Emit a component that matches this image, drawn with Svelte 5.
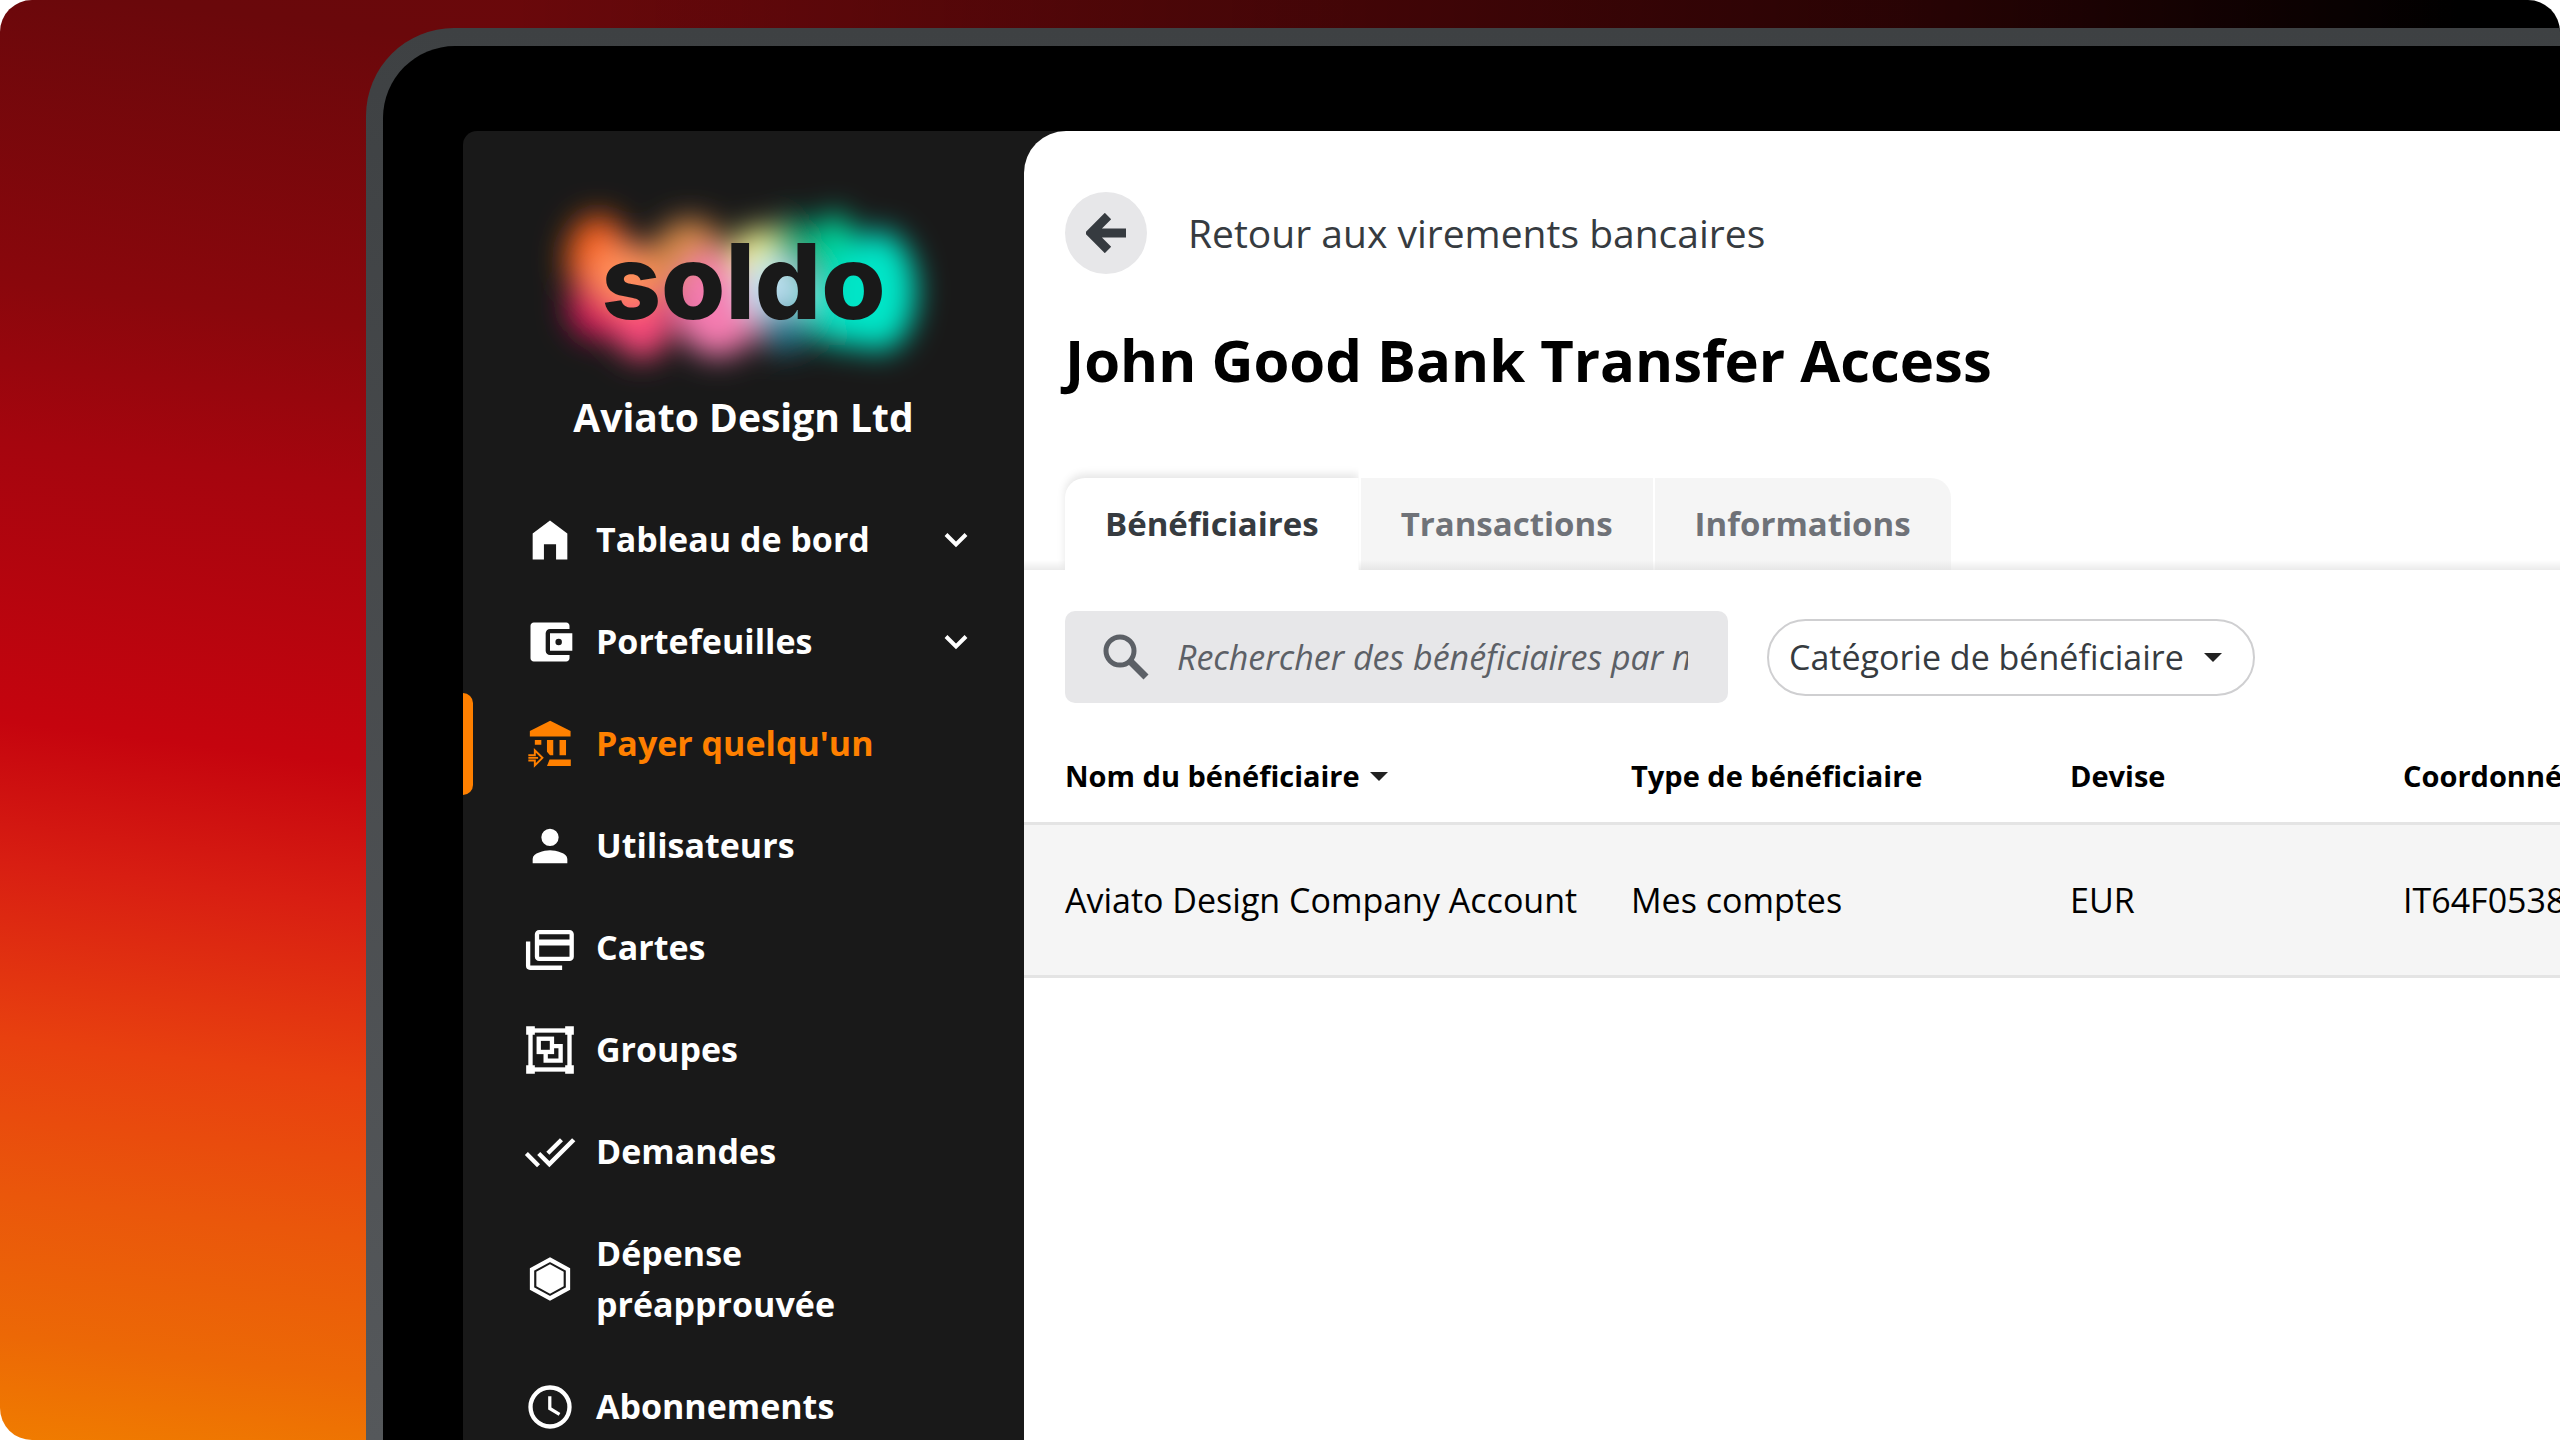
<script>
	let activeTab = $state('Bénéficiaires');
	let search = $state('');
	let category = $state('all');

	const tabs = ['Bénéficiaires', 'Transactions', 'Informations'];

	const menu = [
		{ icon: 'home', label: 'Tableau de bord', expandable: true },
		{ icon: 'wallet', label: 'Portefeuilles', expandable: true },
		{ icon: 'bank', label: "Payer quelqu'un", active: true },
		{ icon: 'user', label: 'Utilisateurs' },
		{ icon: 'cards', label: 'Cartes' },
		{ icon: 'group', label: 'Groupes' },
		{ icon: 'checks', label: 'Demandes' },
		{ icon: 'hexagon', label: 'Dépense préapprouvée' },
		{ icon: 'clock', label: 'Abonnements' }
	];

	const rows = [
		{ name: 'Aviato Design Company Account', type: 'Mes comptes', currency: 'EUR', details: 'IT64F0538' }
	];
</script>

{#snippet icon(name)}
	<svg class="icon" viewBox="0 0 24 24" fill="currentColor" aria-hidden="true">
		{#if name === 'home'}
			<path d="M4 21V9l8-6 8 6v12h-5.2v-7H9.2v7z" />
		{:else if name === 'wallet'}
			<path d="M21 18v1.500c0 .8-.7 1.500-1.500 1.500h-15C3.700 21 3 20.300 3 19.500v-15C3 3.700 3.700 3 4.500 3h15c.8 0 1.500.7 1.500 1.500V6h-9c-1.100 0-2 .9-2 2v8c0 1.100.9 2 2 2zm-9-2h10.300V8H12zm4-2.500a1.500 1.500 0 1 1 0-3 1.500 1.500 0 0 1 0 3z" />
		{:else if name === 'bank'}
			<path d="M12.100 1.300 2.700 6v2.500h18.800V6z" />
			<path d="M5 10.200h3v2.200H5zM10.600 10.200h2.900v7H12l-1.400-1.600zM16.400 10.200h3v7h-3zM11.800 19.200h9.800v3h-11z" />
			<path d="M2 17.200h3v-2.300l3.500 3.500L5 21.900v-2.300H2M2 18.400h4.500" fill="none" stroke="currentColor" stroke-width="0.9" />
		{:else if name === 'user'}
			<path d="M12 12a4 4 0 1 0 0-8 4 4 0 0 0 0 8zm0 2c-2.700 0-8 1.300-8 4v2h16v-2c0-2.700-5.300-4-8-4z" />
		{:else if name === 'cards'}
			<g fill="none" stroke="currentColor" stroke-width="2">
				<rect x="6" y="4.700" width="16" height="12.300" rx="1" />
				<path d="M6 9.500h16" stroke-width="2.800" />
				<path d="M1.900 9v11.200c0 .6.300.9.900.9h14.800" />
			</g>
		{:else if name === 'group'}
			<path d="M1 1h4v4H1zM19 1h4v4h-4zM1 19h4v4H1zM19 19h4v4h-4z" />
			<g fill="none" stroke="currentColor" stroke-width="2">
				<rect x="3" y="3" width="18" height="18" />
				<rect x="6.800" y="6.800" width="6.100" height="6.100" />
				<path d="M13 10.200h3.900v6.700h-6.900V13" />
			</g>
		{:else if name === 'checks'}
			<path d="m18 7-1.400-1.400-6.300 6.300 1.400 1.400zm4.200-1.400L11.700 16.200 7.500 12l-1.400 1.400 5.600 5.600 12-12zM.4 13.400 6 19l1.400-1.400L1.800 12z" />
		{:else if name === 'hexagon'}
			<path d="m12 3.100 8.300 4.500v8.800L12 20.900l-8.300-4.500V7.600z" fill="none" stroke="currentColor" stroke-width="2" />
			<path d="m12 5.200 6.300 3.400v6.800L12 18.800l-6.300-3.400V8.600z" />
		{:else if name === 'clock'}
			<g fill="none" stroke="currentColor">
				<circle cx="12" cy="12" r="9" stroke-width="2" />
				<path d="M11.900 7v5.700l4.500 2.700" stroke-width="1.500" />
			</g>
		{/if}
	</svg>
{/snippet}

<div class="stage">
	<div class="device">
		<div class="screen">
			<aside class="sidebar">
				<div class="logo">
					<svg class="glow" viewBox="0 0 400 200" aria-hidden="true">
						<defs>
							<filter id="soft" x="-30%" y="-30%" width="160%" height="160%">
								<feGaussianBlur stdDeviation="15" />
							</filter>
						</defs>
						<g filter="url(#soft)">
							<ellipse cx="54" cy="76" rx="32" ry="44" fill="#f5601c" />
							<ellipse cx="56" cy="124" rx="32" ry="32" fill="#d81b5c" />
							<ellipse cx="98" cy="136" rx="30" ry="40" fill="#fa4a7c" />
							<ellipse cx="84" cy="92" rx="38" ry="32" fill="#ff8f5c" />
							<ellipse cx="146" cy="76" rx="38" ry="40" fill="#d98a48" />
							<ellipse cx="174" cy="122" rx="44" ry="52" fill="#f57cb0" />
							<ellipse cx="214" cy="74" rx="26" ry="30" fill="#f4f58c" />
							<ellipse cx="248" cy="62" rx="20" ry="28" fill="#14b07a" />
							<ellipse cx="230" cy="108" rx="34" ry="34" fill="#bce0f2" />
							<ellipse cx="240" cy="146" rx="28" ry="22" fill="#2c7f96" />
							<ellipse cx="290" cy="72" rx="22" ry="42" fill="#00d89c" />
							<ellipse cx="300" cy="120" rx="40" ry="44" fill="#10dcc0" />
							<ellipse cx="334" cy="108" rx="38" ry="60" fill="#00e6c8" />
						</g>
					</svg>
					<span class="wordmark">soldo</span>
				</div>
				<div class="company">Aviato Design Ltd</div>

				<nav>
					{#each menu as item}
						<a href="#{item.icon}" class="item" class:active={item.active}>
							{@render icon(item.icon)}
							<span class="label">{item.label}</span>
							{#if item.expandable}
								<svg class="chevron" viewBox="0 0 24 16" aria-hidden="true">
									<path d="M2 2.500 12 12.500 22 2.500" fill="none" stroke="currentColor" stroke-width="4" />
								</svg>
							{/if}
						</a>
					{/each}
				</nav>
			</aside>

			<main>
				<a class="back" href="#virements">
					<span class="circle">
						<svg viewBox="0 0 40 40" aria-hidden="true">
							<path d="M22 3 5 20l17 17M6 20h34" fill="none" stroke="currentColor" stroke-width="9" />
						</svg>
					</span>
					Retour aux virements bancaires
				</a>
				<h1>John Good Bank Transfer Access</h1>

				<div class="tabs" role="tablist">
					{#each tabs as tab}
						<button
							role="tab"
							class="tab"
							class:selected={tab === activeTab}
							aria-selected={tab === activeTab}
							onclick={() => (activeTab = tab)}>{tab}</button>
					{/each}
				</div>

				<div class="filters">
					<label class="search">
						<svg viewBox="0 0 46 46" aria-hidden="true">
							<circle cx="17" cy="17" r="14" fill="none" stroke="currentColor" stroke-width="5" />
							<path d="m27 27 16 16" stroke="currentColor" stroke-width="7" />
						</svg>
						<input type="text" bind:value={search} placeholder="Rechercher des bénéficiaires par nom" aria-label="Rechercher des bénéficiaires" />
					</label>
					<div class="category">
						<select bind:value={category} aria-label="Catégorie de bénéficiaire">
							<option value="all">Catégorie de bénéficiaire</option>
						</select>
						<span class="caret"></span>
					</div>
				</div>

				<table>
					<thead>
						<tr>
							<th class="col-name">Nom du bénéficiaire<span class="caret"></span></th>
							<th class="col-type">Type de bénéficiaire</th>
							<th class="col-currency">Devise</th>
							<th>Coordonnées</th>
						</tr>
					</thead>
					<tbody>
						{#each rows as row}
							<tr>
								<td>{row.name}</td>
								<td>{row.type}</td>
								<td>{row.currency}</td>
								<td>{row.details}</td>
							</tr>
						{/each}
					</tbody>
				</table>
			</main>
		</div>
	</div>
</div>

<style>
	:global(body) {
		margin: 0;
		background: #fff;
	}

	.stage {
		box-sizing: border-box;
		height: 100vh;
		padding: 28px 0 0 366px;
		overflow: hidden;
		border-radius: 32px 32px 0 32px;
		background:
			linear-gradient(90deg, transparent 20%, #0009 74%, #000 96%) top / 100% 120px no-repeat,
			linear-gradient(187deg, #66080a 0%, #6a080b 17%, #8a070c 34%, #a5050e 43%, #c5040e 59%, #d81e12 67%, #e8400f 77%, #ea570b 86%, #ec6806 94%, #f07c00 100%);
		font-family: "Open Sans", "Noto Sans", sans-serif;
	}

	.device {
		box-sizing: border-box;
		height: 100%;
		padding: 18px 0 0 17px;
		border-radius: 88px 0 0 0;
		background: linear-gradient(#3e4143, #55585b);
	}

	.screen {
		box-sizing: border-box;
		display: flex;
		height: 100%;
		padding: 85px 0 0 80px;
		border-radius: 72px 0 0 0;
		background: #000;
	}

	.sidebar {
		flex: 0 0 561px;
		background: #191919;
		border-radius: 14px 0 0 0;
		color: #fff;
		/* keeps the dark corner behind the rounded panel */
		box-shadow: 40px 0 0 #191919;
	}

	.logo {
		position: relative;
		display: flex;
		justify-content: center;
		margin-top: 52px;
		height: 208px;
	}

	.glow {
		position: absolute;
		width: 400px;
		height: 200px;
		overflow: visible;
	}

	.wordmark {
		position: relative;
		color: #191919;
		font: 800 104px/196px Inter, sans-serif;
	}

	.company {
		font-size: 39px;
		font-weight: 700;
		line-height: 52px;
		text-align: center;
		margin-bottom: 46px;
	}

	.item {
		display: flex;
		align-items: center;
		gap: 20px;
		padding: 25px 56px 26px 61px;
		color: #fff;
		font-size: 34px;
		font-weight: 700;
		line-height: 51px;
		text-decoration: none;
	}

	.item.active {
		color: #ff8000;
		position: relative;
	}

	.item.active::before {
		content: '';
		position: absolute;
		left: 0;
		top: 0;
		bottom: 0;
		width: 10px;
		border-radius: 0 10px 10px 0;
		background: #ff8000;
	}

	.icon {
		flex: none;
		width: 52px;
		height: 52px;
		margin: -1px 0;
	}

	.label {
		flex: 1;
	}

	.chevron {
		flex: none;
		width: 24px;
		height: 16px;
	}

	main {
		position: relative;
		flex: 1;
		min-width: 0;
		overflow: hidden;
		background: #fff;
		border-radius: 42px 0 0 0;
		color: #000;
	}

	.back {
		display: flex;
		align-items: center;
		gap: 41px;
		margin: 61px 41px 0;
		color: #363b40;
		font-size: 39px;
		line-height: 52px;
		text-decoration: none;
	}

	.circle {
		display: grid;
		place-items: center;
		width: 82px;
		height: 82px;
		border-radius: 50%;
		background: #e7e7e9;
	}

	.circle svg {
		width: 40px;
		height: 40px;
	}

	h1 {
		margin: 46px 41px 0;
		font-size: 58px;
		font-weight: 700;
		line-height: 80px;
		white-space: nowrap;
	}

	.tabs {
		display: flex;
		gap: 2px;
		margin-top: 78px;
		padding: 0 41px;
		background: linear-gradient(transparent 82px, #ebebeb);
	}

	.tab {
		padding: 0 40px;
		border: 0;
		background: linear-gradient(#f5f5f5 82px, #e6e6e6);
		color: #6f7278;
		font: inherit;
		font-size: 33px;
		font-weight: 700;
		line-height: 92px;
	}

	.tab:first-child {
		border-radius: 20px 0 0 0;
	}

	.tab:last-child {
		border-radius: 0 20px 0 0;
	}

	.tab.selected {
		background: #fff;
		color: #363b40;
		box-shadow: 0 -4px 8px #0000001a;
		clip-path: inset(-12px 0 0 -12px);
	}

	.filters {
		display: flex;
		align-items: center;
		gap: 39px;
		padding: 41px 41px 0;
	}

	.search {
		box-sizing: border-box;
		display: flex;
		align-items: center;
		gap: 28px;
		width: 663px;
		height: 92px;
		padding: 0 40px 0 38px;
		border-radius: 10px;
		background: #e7e7e9;
		color: #5c6066;
	}

	.search svg {
		flex: none;
		width: 46px;
		height: 46px;
	}

	input {
		flex: 1;
		min-width: 0;
		padding: 0;
		border: 0;
		outline: 0;
		background: none;
		color: inherit;
		font: inherit;
		font-size: 34px;
		font-style: italic;
	}

	input::placeholder {
		color: #5c6066;
	}

	.category {
		display: flex;
		align-items: center;
		position: relative;
	}

	select {
		appearance: none;
		height: 77px;
		padding: 0 69px 0 20px;
		border: 2px solid #cfcfd1;
		border-radius: 40px;
		background: #fff;
		color: #363b40;
		font: inherit;
		font-size: 34px;
	}

	.caret {
		display: inline-block;
		border: 9px solid transparent;
		border-top-color: #222;
		border-bottom: 0;
	}

	.category .caret {
		position: absolute;
		right: 33px;
		pointer-events: none;
	}

	th .caret {
		margin-left: 10px;
		vertical-align: 6px;
	}

	table {
		width: 100%;
		margin-top: 25px;
		border-collapse: collapse;
		table-layout: fixed;
		white-space: nowrap;
	}

	.col-name {
		width: 566px;
	}

	.col-type {
		width: 439px;
	}

	.col-currency {
		width: 333px;
	}

	th,
	td {
		padding: 0;
		text-align: left;
	}

	th {
		height: 94px;
		font-size: 29px;
		font-weight: 700;
	}

	td {
		height: 150px;
		border-top: 3px solid #e4e4e4;
		border-bottom: 3px solid #e4e4e4;
		background: #f5f5f5;
		font-size: 34px;
	}

	th:first-child,
	td:first-child {
		padding-left: 41px;
	}
</style>
